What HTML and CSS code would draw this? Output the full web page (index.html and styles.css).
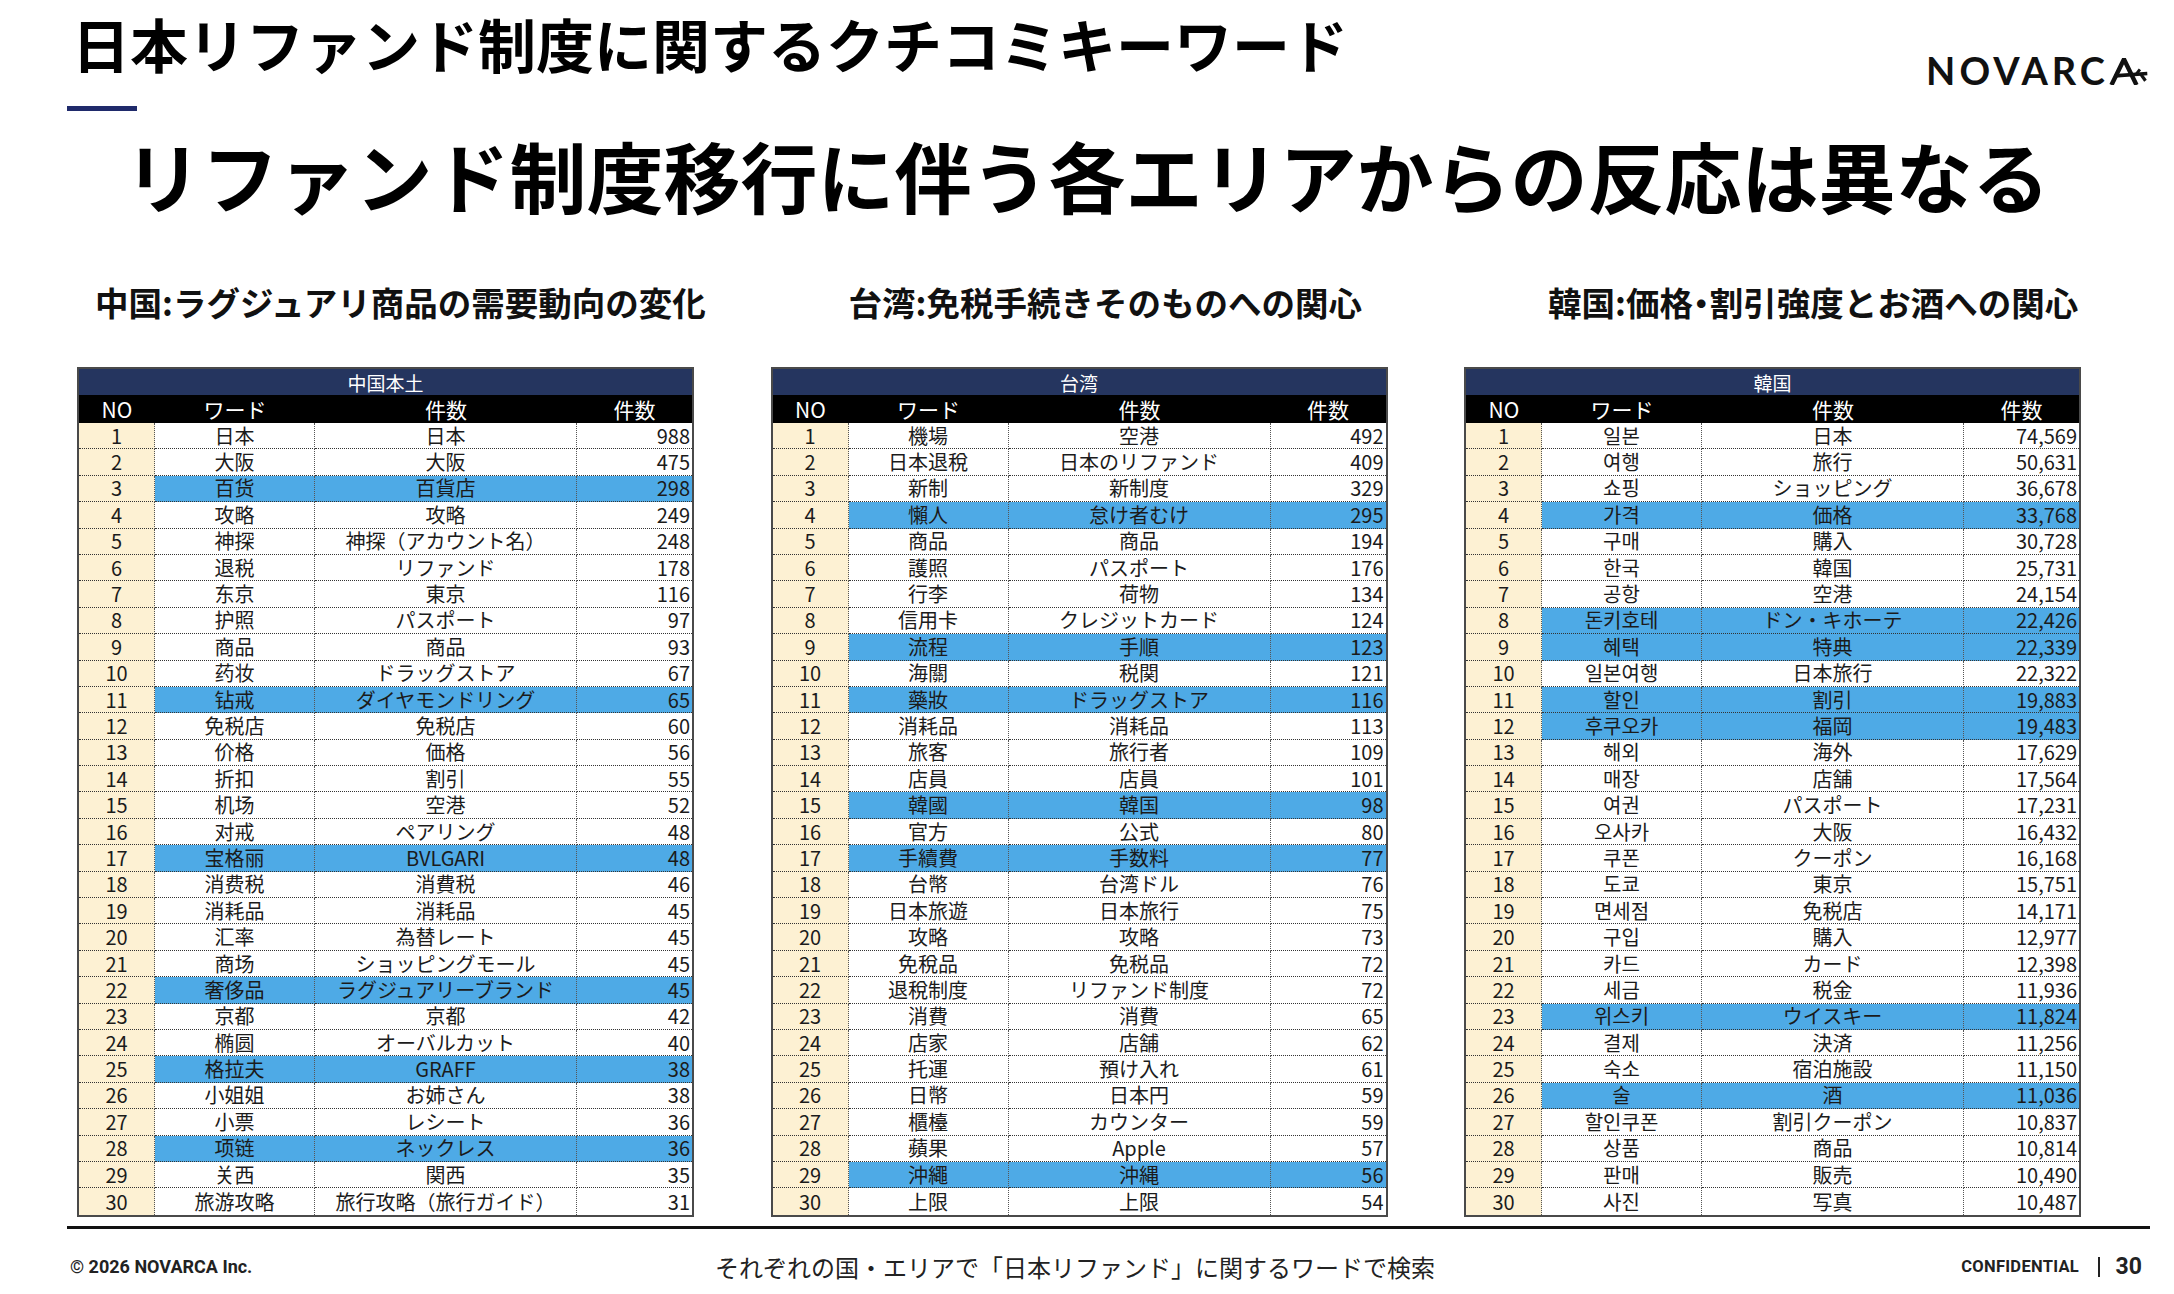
FILE: index.html
```html
<!DOCTYPE html>
<html lang="ja">
<head>
<meta charset="utf-8">
<title>日本リファンド制度に関するクチコミキーワード</title>
<link rel="stylesheet" href="styles.css">
</head>
<body>
<header class="top">
  <h1 class="page-title">日本リファンド制度に関するクチコミキーワード</h1>
  <div class="logo">NOVARC<svg class="logo-a" width="41" height="27" viewBox="0 0 33 22" aria-hidden="true"><path d="M1.8 22 L12 1 L22.2 22" fill="none" stroke="#111" stroke-width="3.6" stroke-linejoin="miter"/><path d="M4.5 14.6 L31 12.6" fill="none" stroke="#111" stroke-width="3"/><path d="M25.5 12.9 L29.5 18.5" fill="none" stroke="#111" stroke-width="2.6"/><path d="M22 13.2 L25 9.2" fill="none" stroke="#111" stroke-width="2.4"/></svg></div>
</header>
<div class="accent"></div>
<p class="headline">リファンド制度移行に伴う各エリアからの反応は異なる</p>

<main class="sections">
  <section class="panel">
    <h2 class="section-title st-cn">中国:ラグジュアリ商品の需要動向の変化</h2>
    <table class="kw">
      <colgroup><col class="c-no"><col class="c-word"><col class="c-item"><col class="c-num"></colgroup>
      <thead>
        <tr><th class="region" colspan="4">中国本土</th></tr>
        <tr class="cols"><th>NO</th><th>ワード</th><th>件数</th><th>件数</th></tr>
      </thead>
      <tbody>
        <tr><td class="no">1</td><td>日本</td><td>日本</td><td class="num">988</td></tr>
        <tr><td class="no">2</td><td>大阪</td><td>大阪</td><td class="num">475</td></tr>
        <tr class="hl"><td class="no">3</td><td>百货</td><td>百貨店</td><td class="num">298</td></tr>
        <tr><td class="no">4</td><td>攻略</td><td>攻略</td><td class="num">249</td></tr>
        <tr><td class="no">5</td><td>神探</td><td>神探（アカウント名）</td><td class="num">248</td></tr>
        <tr><td class="no">6</td><td>退税</td><td>リファンド</td><td class="num">178</td></tr>
        <tr><td class="no">7</td><td>东京</td><td>東京</td><td class="num">116</td></tr>
        <tr><td class="no">8</td><td>护照</td><td>パスポート</td><td class="num">97</td></tr>
        <tr><td class="no">9</td><td>商品</td><td>商品</td><td class="num">93</td></tr>
        <tr><td class="no">10</td><td>药妆</td><td>ドラッグストア</td><td class="num">67</td></tr>
        <tr class="hl"><td class="no">11</td><td>钻戒</td><td>ダイヤモンドリング</td><td class="num">65</td></tr>
        <tr><td class="no">12</td><td>免税店</td><td>免税店</td><td class="num">60</td></tr>
        <tr><td class="no">13</td><td>价格</td><td>価格</td><td class="num">56</td></tr>
        <tr><td class="no">14</td><td>折扣</td><td>割引</td><td class="num">55</td></tr>
        <tr><td class="no">15</td><td>机场</td><td>空港</td><td class="num">52</td></tr>
        <tr><td class="no">16</td><td>对戒</td><td>ペアリング</td><td class="num">48</td></tr>
        <tr class="hl"><td class="no">17</td><td>宝格丽</td><td>BVLGARI</td><td class="num">48</td></tr>
        <tr><td class="no">18</td><td>消费税</td><td>消費税</td><td class="num">46</td></tr>
        <tr><td class="no">19</td><td>消耗品</td><td>消耗品</td><td class="num">45</td></tr>
        <tr><td class="no">20</td><td>汇率</td><td>為替レート</td><td class="num">45</td></tr>
        <tr><td class="no">21</td><td>商场</td><td>ショッピングモール</td><td class="num">45</td></tr>
        <tr class="hl"><td class="no">22</td><td>奢侈品</td><td>ラグジュアリーブランド</td><td class="num">45</td></tr>
        <tr><td class="no">23</td><td>京都</td><td>京都</td><td class="num">42</td></tr>
        <tr><td class="no">24</td><td>椭圆</td><td>オーバルカット</td><td class="num">40</td></tr>
        <tr class="hl"><td class="no">25</td><td>格拉夫</td><td>GRAFF</td><td class="num">38</td></tr>
        <tr><td class="no">26</td><td>小姐姐</td><td>お姉さん</td><td class="num">38</td></tr>
        <tr><td class="no">27</td><td>小票</td><td>レシート</td><td class="num">36</td></tr>
        <tr class="hl"><td class="no">28</td><td>项链</td><td>ネックレス</td><td class="num">36</td></tr>
        <tr><td class="no">29</td><td>关西</td><td>関西</td><td class="num">35</td></tr>
        <tr><td class="no">30</td><td>旅游攻略</td><td>旅行攻略（旅行ガイド）</td><td class="num">31</td></tr>
      </tbody>
    </table>
  </section>

  <section class="panel">
    <h2 class="section-title st-tw">台湾:免税手続きそのものへの関心</h2>
    <table class="kw">
      <colgroup><col class="c-no"><col class="c-word"><col class="c-item"><col class="c-num"></colgroup>
      <thead>
        <tr><th class="region" colspan="4">台湾</th></tr>
        <tr class="cols"><th>NO</th><th>ワード</th><th>件数</th><th>件数</th></tr>
      </thead>
      <tbody>
        <tr><td class="no">1</td><td>機場</td><td>空港</td><td class="num">492</td></tr>
        <tr><td class="no">2</td><td>日本退稅</td><td>日本のリファンド</td><td class="num">409</td></tr>
        <tr><td class="no">3</td><td>新制</td><td>新制度</td><td class="num">329</td></tr>
        <tr class="hl"><td class="no">4</td><td>懶人</td><td>怠け者むけ</td><td class="num">295</td></tr>
        <tr><td class="no">5</td><td>商品</td><td>商品</td><td class="num">194</td></tr>
        <tr><td class="no">6</td><td>護照</td><td>パスポート</td><td class="num">176</td></tr>
        <tr><td class="no">7</td><td>行李</td><td>荷物</td><td class="num">134</td></tr>
        <tr><td class="no">8</td><td>信用卡</td><td>クレジットカード</td><td class="num">124</td></tr>
        <tr class="hl"><td class="no">9</td><td>流程</td><td>手順</td><td class="num">123</td></tr>
        <tr><td class="no">10</td><td>海關</td><td>税関</td><td class="num">121</td></tr>
        <tr class="hl"><td class="no">11</td><td>藥妝</td><td>ドラッグストア</td><td class="num">116</td></tr>
        <tr><td class="no">12</td><td>消耗品</td><td>消耗品</td><td class="num">113</td></tr>
        <tr><td class="no">13</td><td>旅客</td><td>旅行者</td><td class="num">109</td></tr>
        <tr><td class="no">14</td><td>店員</td><td>店員</td><td class="num">101</td></tr>
        <tr class="hl"><td class="no">15</td><td>韓國</td><td>韓国</td><td class="num">98</td></tr>
        <tr><td class="no">16</td><td>官方</td><td>公式</td><td class="num">80</td></tr>
        <tr class="hl"><td class="no">17</td><td>手續費</td><td>手数料</td><td class="num">77</td></tr>
        <tr><td class="no">18</td><td>台幣</td><td>台湾ドル</td><td class="num">76</td></tr>
        <tr><td class="no">19</td><td>日本旅遊</td><td>日本旅行</td><td class="num">75</td></tr>
        <tr><td class="no">20</td><td>攻略</td><td>攻略</td><td class="num">73</td></tr>
        <tr><td class="no">21</td><td>免稅品</td><td>免税品</td><td class="num">72</td></tr>
        <tr><td class="no">22</td><td>退稅制度</td><td>リファンド制度</td><td class="num">72</td></tr>
        <tr><td class="no">23</td><td>消費</td><td>消費</td><td class="num">65</td></tr>
        <tr><td class="no">24</td><td>店家</td><td>店舗</td><td class="num">62</td></tr>
        <tr><td class="no">25</td><td>托運</td><td>預け入れ</td><td class="num">61</td></tr>
        <tr><td class="no">26</td><td>日幣</td><td>日本円</td><td class="num">59</td></tr>
        <tr><td class="no">27</td><td>櫃檯</td><td>カウンター</td><td class="num">59</td></tr>
        <tr><td class="no">28</td><td>蘋果</td><td>Apple</td><td class="num">57</td></tr>
        <tr class="hl"><td class="no">29</td><td>沖繩</td><td>沖縄</td><td class="num">56</td></tr>
        <tr><td class="no">30</td><td>上限</td><td>上限</td><td class="num">54</td></tr>
      </tbody>
    </table>
  </section>

  <section class="panel">
    <h2 class="section-title st-kr">韓国:価格<span class="tight">・</span>割引強度とお酒への関心</h2>
    <table class="kw">
      <colgroup><col class="c-no"><col class="c-word"><col class="c-item"><col class="c-num"></colgroup>
      <thead>
        <tr><th class="region" colspan="4">韓国</th></tr>
        <tr class="cols"><th>NO</th><th>ワード</th><th>件数</th><th>件数</th></tr>
      </thead>
      <tbody>
        <tr><td class="no">1</td><td>일본</td><td>日本</td><td class="num">74,569</td></tr>
        <tr><td class="no">2</td><td>여행</td><td>旅行</td><td class="num">50,631</td></tr>
        <tr><td class="no">3</td><td>쇼핑</td><td>ショッピング</td><td class="num">36,678</td></tr>
        <tr class="hl"><td class="no">4</td><td>가격</td><td>価格</td><td class="num">33,768</td></tr>
        <tr><td class="no">5</td><td>구매</td><td>購入</td><td class="num">30,728</td></tr>
        <tr><td class="no">6</td><td>한국</td><td>韓国</td><td class="num">25,731</td></tr>
        <tr><td class="no">7</td><td>공항</td><td>空港</td><td class="num">24,154</td></tr>
        <tr class="hl"><td class="no">8</td><td>돈키호테</td><td>ドン・キホーテ</td><td class="num">22,426</td></tr>
        <tr class="hl"><td class="no">9</td><td>혜택</td><td>特典</td><td class="num">22,339</td></tr>
        <tr><td class="no">10</td><td>일본여행</td><td>日本旅行</td><td class="num">22,322</td></tr>
        <tr class="hl"><td class="no">11</td><td>할인</td><td>割引</td><td class="num">19,883</td></tr>
        <tr class="hl"><td class="no">12</td><td>후쿠오카</td><td>福岡</td><td class="num">19,483</td></tr>
        <tr><td class="no">13</td><td>해외</td><td>海外</td><td class="num">17,629</td></tr>
        <tr><td class="no">14</td><td>매장</td><td>店舗</td><td class="num">17,564</td></tr>
        <tr><td class="no">15</td><td>여권</td><td>パスポート</td><td class="num">17,231</td></tr>
        <tr><td class="no">16</td><td>오사카</td><td>大阪</td><td class="num">16,432</td></tr>
        <tr><td class="no">17</td><td>쿠폰</td><td>クーポン</td><td class="num">16,168</td></tr>
        <tr><td class="no">18</td><td>도쿄</td><td>東京</td><td class="num">15,751</td></tr>
        <tr><td class="no">19</td><td>면세점</td><td>免税店</td><td class="num">14,171</td></tr>
        <tr><td class="no">20</td><td>구입</td><td>購入</td><td class="num">12,977</td></tr>
        <tr><td class="no">21</td><td>카드</td><td>カード</td><td class="num">12,398</td></tr>
        <tr><td class="no">22</td><td>세금</td><td>税金</td><td class="num">11,936</td></tr>
        <tr class="hl"><td class="no">23</td><td>위스키</td><td>ウイスキー</td><td class="num">11,824</td></tr>
        <tr><td class="no">24</td><td>결제</td><td>決済</td><td class="num">11,256</td></tr>
        <tr><td class="no">25</td><td>숙소</td><td>宿泊施設</td><td class="num">11,150</td></tr>
        <tr class="hl"><td class="no">26</td><td>술</td><td>酒</td><td class="num">11,036</td></tr>
        <tr><td class="no">27</td><td>할인쿠폰</td><td>割引クーポン</td><td class="num">10,837</td></tr>
        <tr><td class="no">28</td><td>상품</td><td>商品</td><td class="num">10,814</td></tr>
        <tr><td class="no">29</td><td>판매</td><td>販売</td><td class="num">10,490</td></tr>
        <tr><td class="no">30</td><td>사진</td><td>写真</td><td class="num">10,487</td></tr>
      </tbody>
    </table>
  </section>
</main>

<div class="rule"></div>
<footer class="foot">
  <span class="copy">© 2026 NOVARCA Inc.</span>
  <span class="note">それぞれの国・エリアで「日本リファンド」に関するワードで検索</span>
  <span class="conf"><span class="conf-label">CONFIDENTIAL</span><span class="conf-sep"></span><span class="page-no">30</span></span>
</footer>
</body>
</html>
```

FILE: styles.css
```css
* { box-sizing: border-box; }
html, body { margin: 0; padding: 0; }
body {
  width: 2174px;
  height: 1294px;
  overflow: hidden;
  background: #ffffff;
  color: #111111;
  font-family: "Noto Sans CJK JP", "Noto Sans", sans-serif;
}

/* header */
.top {
  display: flex;
  justify-content: space-between;
  align-items: flex-start;
  height: 74px;
  padding: 0 24px 0 72px;
}
.page-title {
  margin: 0;
  padding-top: 14px;
  font-size: 58px;
  line-height: 58px;
  font-weight: 700;
  color: #000;
  white-space: nowrap;
}
.logo {
  margin-top: 51px;
  font-family: Lato, "Noto Sans", sans-serif;
  font-size: 38px;
  line-height: 38px;
  font-weight: 700;
  letter-spacing: 4px;
  color: #111;
  white-space: nowrap;
}
.logo-a { vertical-align: 0; }

.accent {
  margin: 32px 0 0 67px;
  width: 70px;
  height: 5px;
  background: #1f2a6b;
}
.headline {
  margin: 25px 0 0;
  text-align: center;
  font-size: 77px;
  line-height: 77px;
  font-weight: 700;
  color: #000;
  white-space: nowrap;
}

/* panels */
.sections {
  display: grid;
  grid-template-columns: repeat(3, 617px);
  column-gap: 76.5px;
  margin-left: 77px;
}
.section-title {
  margin: 72px 0 49px;
  font-size: 33.5px;
  line-height: 33px;
  font-weight: 700;
  color: #111;
  white-space: nowrap;
}
.section-title .tight { font-feature-settings: "palt" 1; }
.st-cn { padding-left: 18px; }
.st-tw { padding-left: 78px; }
.st-kr { padding-left: 84px; }

/* keyword tables */
.kw {
  width: 617px;
  table-layout: fixed;
  border-collapse: separate;
  border-spacing: 0;
  border: 2px solid #4a4a4a;
  font-size: 20px;
  color: #1b1b1b;
}
.kw .c-no { width: 76px; }
.kw .c-word { width: 160px; }
.kw .c-item { width: 262px; }
.kw .c-num { width: 115px; }

.kw th {
  padding: 0;
  font-weight: 400;
  color: #fff;
  line-height: 1;
  white-space: nowrap;
}
.kw th.region {
  height: 26px;
  background: #25355f;
  font-size: 19px;
}
.kw .cols th {
  height: 28px;
  background: #000;
  font-size: 21px;
}
.kw td {
  height: 26.4px;
  padding: 0;
  text-align: center;
  line-height: 1;
  white-space: nowrap;
  border-bottom: 1px dotted #333;
  border-right: 1px dotted #555;
}
.kw td.no { background: #fdf1d3; }
.kw td.num {
  text-align: right;
  padding-right: 2px;
  border-right: 0;
}
.kw tr.hl td:not(.no) { background: #4eaae6; }
.kw tbody tr:last-child td { border-bottom: 0; }

/* footer */
.rule {
  margin: 9px 0 0 67px;
  width: 2083px;
  height: 3px;
  background: #111;
}
.foot {
  display: flex;
  align-items: center;
  height: 28px;
  margin-top: 24px;
  padding: 0 32px 0 70px;
  color: #222;
}
.copy {
  width: 645px;
  font-family: Roboto, "Liberation Sans", sans-serif;
  font-weight: 700;
  font-size: 18px;
}
.note {
  font-size: 24px;
  white-space: nowrap;
}
.conf {
  margin-left: auto;
  display: flex;
  align-items: center;
  font-family: Roboto, "Liberation Sans", sans-serif;
  font-weight: 700;
}
.conf-label { font-size: 16.5px; letter-spacing: 0.3px; }
.conf-sep {
  width: 1.5px;
  height: 20px;
  background: #222;
  margin: 0 16px 0 19px;
}
.page-no { font-size: 23px; }
```
